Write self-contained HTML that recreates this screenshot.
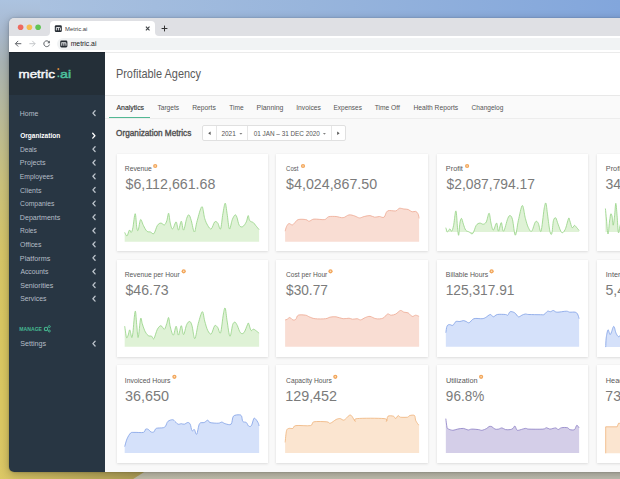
<!DOCTYPE html>
<html><head><meta charset="utf-8"><style>
*{margin:0;padding:0;box-sizing:border-box}
html,body{width:620px;height:479px;overflow:hidden}
body{position:relative;font-family:"Liberation Sans",sans-serif;
background:linear-gradient(180deg,#a9bdda 0%,#a4b4c6 18%,#b6b38a 35%,#d4bf62 55%,#d9c564 100%);}
.a{position:absolute}
.card{position:absolute;width:151.6px;height:97.4px;background:#fff;box-shadow:0 1px 2.5px rgba(0,0,0,.11),0 0 1px rgba(0,0,0,.06)}
svg.ov{position:absolute;left:0;top:0;width:620px;height:479px;font-family:"Liberation Sans",sans-serif}
</style></head><body>
<div class="a" style="left:0;top:0;width:620px;height:60px;background:linear-gradient(90deg,#acc3e0 0%,#98b5dc 50%,#82a6dc 100%)"></div>
<div class="a" style="left:0;top:0;width:40px;height:479px;background:linear-gradient(180deg,#acc3e0 0px,#a9bad0 30px,#aab4b4 63px,#bcbc96 123px,#cbc27c 183px,#d6c568 253px,#d9c762 320px,#dbc862 400px,#dcc865 479px)"></div>
<svg class="a" style="left:0;top:440px" width="620" height="39" viewBox="0 440 620 39"><defs><linearGradient id="yb" x1="0" x2="1" y1="0" y2="0"><stop offset="0" stop-color="#dcc865"/><stop offset="1" stop-color="#ae9e56"/></linearGradient><linearGradient id="gb" x1="0" x2="1" y1="0" y2="0"><stop offset="0" stop-color="#c2bfac"/><stop offset="1" stop-color="#bebdb0"/></linearGradient></defs>
<rect x="0" y="440" width="200" height="39" fill="#ad9e56"/><rect x="0" y="440" width="140" height="39" fill="url(#yb)"/><polygon points="133.2,479 620,479 620,440 194.5,440" fill="url(#gb)"/></svg>
<div class="a" style="left:9px;top:18px;width:660px;height:454px;border-radius:5px;overflow:hidden;box-shadow:0 0 1.5px rgba(0,0,0,.3),0 2px 10px rgba(0,0,0,.27)">
 <div class="a" style="left:-9px;top:-18px;width:620px;height:479px">
  <div class="a" style="left:0;top:18px;width:680px;height:18px;background:#dfe0e4"></div>
  <div class="a" style="left:45px;top:31px;width:115px;height:5px;background:#fff"></div><div class="a" style="left:40px;top:26px;width:10px;height:10px;background:#dfe0e4;border-bottom-right-radius:4px"></div><div class="a" style="left:155px;top:26px;width:10px;height:10px;background:#dfe0e4;border-bottom-left-radius:4px"></div><div class="a" style="left:50px;top:21px;width:105px;height:15px;background:#fff;border-radius:4px 4px 0 0"></div>
  <div class="a" style="left:0;top:36px;width:680px;height:16px;background:#fff"></div>
  <div class="a" style="left:56.8px;top:38.2px;width:680px;height:12.1px;border-radius:6px;background:#f1f3f4"></div>
  <div class="a" style="left:0;top:52px;width:105px;height:427px;background:#283643"></div>
  <div class="a" style="left:0;top:52px;width:105px;height:43px;background:#242f38"></div><div class="a" style="left:0;top:52px;width:105px;height:1px;background:#1e262e"></div>
  <div class="a" style="left:105px;top:52px;width:575px;height:427px;background:#f9f9f9"></div>
  <div class="a" style="left:105px;top:52px;width:575px;height:44px;background:#fff;border-top:1px solid #ebebeb;border-bottom:1px solid #e8e8e8"></div>
  <div class="a" style="left:105px;top:96px;width:575px;height:23px;background:#fafafa;border-bottom:1px solid #ededed"></div>
  <div class="a" style="left:109.3px;top:116.8px;width:41px;height:1.3px;background:#52b893"></div>
  <div class="a" style="left:202px;top:125px;width:144px;height:16px;background:#fff;border:1px solid #e0e0e0;border-radius:2px"></div>
  <div class="a" style="left:216px;top:126px;width:1px;height:14px;background:#e6e6e6"></div>
  <div class="a" style="left:247px;top:126px;width:1px;height:14px;background:#e6e6e6"></div>
  <div class="a" style="left:331px;top:126px;width:1px;height:14px;background:#e6e6e6"></div>
  <div class="card" style="left:116.5px;top:153.5px"></div><div class="card" style="left:276.0px;top:153.5px"></div><div class="card" style="left:436.6px;top:153.5px"></div><div class="card" style="left:596.8px;top:153.5px"></div><div class="card" style="left:116.5px;top:259.5px"></div><div class="card" style="left:276.0px;top:259.5px"></div><div class="card" style="left:436.6px;top:259.5px"></div><div class="card" style="left:596.8px;top:259.5px"></div><div class="card" style="left:116.5px;top:365.3px"></div><div class="card" style="left:276.0px;top:365.3px"></div><div class="card" style="left:436.6px;top:365.3px"></div><div class="card" style="left:596.8px;top:365.3px"></div>
 </div>
</div>
<svg class="ov" viewBox="0 0 620 479">
<circle cx="20.6" cy="27.2" r="2.8" fill="#ee6a5f"/><circle cx="29.4" cy="27.2" r="2.8" fill="#f5bd4f"/><circle cx="38.1" cy="27.2" r="2.8" fill="#61c454"/>
<path d="M124.7,232.4 C125.1,233.0 126.2,236.3 127.0,235.9 C127.8,235.5 128.7,230.7 129.4,230.1 C130.1,229.5 130.6,232.8 131.2,232.4 C131.8,232.0 132.2,230.9 132.9,227.7 C133.5,224.6 134.5,213.7 135.2,213.7 C135.9,213.7 136.3,225.0 136.8,227.7 C137.3,230.5 137.6,231.4 138.2,230.1 C138.9,228.7 139.7,220.3 140.6,219.6 C141.4,218.8 142.3,223.5 143.4,225.4 C144.4,227.4 145.7,230.2 146.9,231.2 C148.1,232.3 149.2,231.6 150.4,232.0 C151.6,232.3 152.7,234.7 153.9,233.6 C155.1,232.5 156.2,227.2 157.4,225.4 C158.6,223.6 159.8,223.1 160.9,223.1 C162.1,223.0 163.5,225.3 164.4,224.9 C165.4,224.5 166.1,222.7 166.8,220.7 C167.5,218.8 168.1,212.9 168.6,213.2 C169.2,213.6 169.6,220.5 170.3,223.1 C170.9,225.7 171.6,229.1 172.6,228.9 C173.6,228.7 175.2,221.7 176.1,221.9 C177.1,222.1 177.6,230.2 178.5,230.1 C179.3,230.0 180.4,221.2 181.3,221.2 C182.1,221.2 182.7,230.5 183.6,230.1 C184.5,229.6 185.8,220.9 186.7,218.4 C187.5,215.9 188.2,214.5 189.0,214.9 C189.8,215.3 190.4,217.9 191.3,220.7 C192.2,223.6 193.4,232.0 194.4,232.0 C195.3,232.0 195.9,224.9 197.2,220.7 C198.4,216.5 200.6,207.1 201.9,206.7 C203.1,206.3 203.7,215.3 204.7,218.4 C205.6,221.5 206.6,223.6 207.7,225.4 C208.8,227.2 210.0,229.5 211.2,228.9 C212.4,228.3 213.6,222.9 214.7,221.9 C215.8,220.9 216.8,221.9 217.8,223.1 C218.7,224.2 219.7,230.5 220.6,228.9 C221.4,227.4 222.1,218.0 222.9,213.7 C223.7,209.4 224.5,203.2 225.2,203.2 C225.9,203.2 226.4,209.4 227.1,213.7 C227.8,218.0 228.6,227.9 229.4,228.9 C230.3,229.9 231.3,221.9 232.3,219.6 C233.2,217.2 234.3,215.3 235.1,214.9 C235.8,214.5 236.2,215.5 236.9,217.2 C237.6,219.0 238.3,223.8 239.3,225.4 C240.2,227.0 241.6,227.2 242.8,226.6 C243.9,226.0 245.4,223.7 246.3,221.9 C247.2,220.1 247.6,215.8 248.2,215.6 C248.7,215.4 248.9,219.6 249.8,220.7 C250.7,221.9 252.3,221.8 253.3,222.6 C254.3,223.4 254.7,224.2 255.6,225.4 C256.6,226.6 258.6,228.9 259.1,229.6 L259.15,241.77 L124.68,241.77 Z" fill="#dff2d6"/><path d="M124.7,232.4 C125.1,233.0 126.2,236.3 127.0,235.9 C127.8,235.5 128.7,230.7 129.4,230.1 C130.1,229.5 130.6,232.8 131.2,232.4 C131.8,232.0 132.2,230.9 132.9,227.7 C133.5,224.6 134.5,213.7 135.2,213.7 C135.9,213.7 136.3,225.0 136.8,227.7 C137.3,230.5 137.6,231.4 138.2,230.1 C138.9,228.7 139.7,220.3 140.6,219.6 C141.4,218.8 142.3,223.5 143.4,225.4 C144.4,227.4 145.7,230.2 146.9,231.2 C148.1,232.3 149.2,231.6 150.4,232.0 C151.6,232.3 152.7,234.7 153.9,233.6 C155.1,232.5 156.2,227.2 157.4,225.4 C158.6,223.6 159.8,223.1 160.9,223.1 C162.1,223.0 163.5,225.3 164.4,224.9 C165.4,224.5 166.1,222.7 166.8,220.7 C167.5,218.8 168.1,212.9 168.6,213.2 C169.2,213.6 169.6,220.5 170.3,223.1 C170.9,225.7 171.6,229.1 172.6,228.9 C173.6,228.7 175.2,221.7 176.1,221.9 C177.1,222.1 177.6,230.2 178.5,230.1 C179.3,230.0 180.4,221.2 181.3,221.2 C182.1,221.2 182.7,230.5 183.6,230.1 C184.5,229.6 185.8,220.9 186.7,218.4 C187.5,215.9 188.2,214.5 189.0,214.9 C189.8,215.3 190.4,217.9 191.3,220.7 C192.2,223.6 193.4,232.0 194.4,232.0 C195.3,232.0 195.9,224.9 197.2,220.7 C198.4,216.5 200.6,207.1 201.9,206.7 C203.1,206.3 203.7,215.3 204.7,218.4 C205.6,221.5 206.6,223.6 207.7,225.4 C208.8,227.2 210.0,229.5 211.2,228.9 C212.4,228.3 213.6,222.9 214.7,221.9 C215.8,220.9 216.8,221.9 217.8,223.1 C218.7,224.2 219.7,230.5 220.6,228.9 C221.4,227.4 222.1,218.0 222.9,213.7 C223.7,209.4 224.5,203.2 225.2,203.2 C225.9,203.2 226.4,209.4 227.1,213.7 C227.8,218.0 228.6,227.9 229.4,228.9 C230.3,229.9 231.3,221.9 232.3,219.6 C233.2,217.2 234.3,215.3 235.1,214.9 C235.8,214.5 236.2,215.5 236.9,217.2 C237.6,219.0 238.3,223.8 239.3,225.4 C240.2,227.0 241.6,227.2 242.8,226.6 C243.9,226.0 245.4,223.7 246.3,221.9 C247.2,220.1 247.6,215.8 248.2,215.6 C248.7,215.4 248.9,219.6 249.8,220.7 C250.7,221.9 252.3,221.8 253.3,222.6 C254.3,223.4 254.7,224.2 255.6,225.4 C256.6,226.6 258.6,228.9 259.1,229.6" fill="none" stroke="#93d283" stroke-width="0.8" stroke-linejoin="round"/><path d="M285.1,231.2 C285.4,230.5 285.9,227.9 286.5,226.6 C287.2,225.3 288.0,223.8 288.9,223.5 C289.8,223.3 291.2,225.0 292.2,224.9 C293.1,224.9 293.5,224.0 294.5,223.1 C295.5,222.2 296.4,220.1 298.2,219.6 C300.1,219.0 303.9,219.3 305.7,219.6 C307.6,219.8 307.9,221.3 309.2,221.2 C310.6,221.1 311.4,219.4 313.9,219.1 C316.4,218.8 322.0,219.9 324.4,219.6 C326.9,219.2 326.7,217.3 328.6,216.7 C330.6,216.2 333.7,216.4 336.1,216.5 C338.5,216.7 341.0,218.0 343.1,217.7 C345.3,217.4 347.0,215.2 349.0,214.9 C350.9,214.6 353.1,215.5 354.8,216.0 C356.6,216.6 358.0,217.8 359.5,217.9 C361.1,218.0 362.4,216.9 364.2,216.5 C365.9,216.1 368.3,215.5 370.0,215.6 C371.8,215.7 373.2,217.1 374.7,217.2 C376.3,217.4 377.8,216.5 379.4,216.5 C381.0,216.5 382.7,218.2 384.1,217.2 C385.4,216.3 385.6,212.0 387.6,210.9 C389.5,209.9 393.8,211.3 395.8,210.9 C397.7,210.5 397.9,208.6 399.3,208.3 C400.6,208.0 402.5,208.8 403.9,209.0 C405.4,209.2 406.8,209.0 408.2,209.5 C409.5,210.0 410.9,211.5 412.1,211.8 C413.4,212.1 414.7,211.1 415.6,211.4 C416.6,211.7 417.4,212.5 418.0,213.7 C418.6,214.9 419.0,217.6 419.1,218.4 L419.15,241.77 L285.14,241.77 Z" fill="#f9ddd3"/><path d="M285.1,231.2 C285.4,230.5 285.9,227.9 286.5,226.6 C287.2,225.3 288.0,223.8 288.9,223.5 C289.8,223.3 291.2,225.0 292.2,224.9 C293.1,224.9 293.5,224.0 294.5,223.1 C295.5,222.2 296.4,220.1 298.2,219.6 C300.1,219.0 303.9,219.3 305.7,219.6 C307.6,219.8 307.9,221.3 309.2,221.2 C310.6,221.1 311.4,219.4 313.9,219.1 C316.4,218.8 322.0,219.9 324.4,219.6 C326.9,219.2 326.7,217.3 328.6,216.7 C330.6,216.2 333.7,216.4 336.1,216.5 C338.5,216.7 341.0,218.0 343.1,217.7 C345.3,217.4 347.0,215.2 349.0,214.9 C350.9,214.6 353.1,215.5 354.8,216.0 C356.6,216.6 358.0,217.8 359.5,217.9 C361.1,218.0 362.4,216.9 364.2,216.5 C365.9,216.1 368.3,215.5 370.0,215.6 C371.8,215.7 373.2,217.1 374.7,217.2 C376.3,217.4 377.8,216.5 379.4,216.5 C381.0,216.5 382.7,218.2 384.1,217.2 C385.4,216.3 385.6,212.0 387.6,210.9 C389.5,209.9 393.8,211.3 395.8,210.9 C397.7,210.5 397.9,208.6 399.3,208.3 C400.6,208.0 402.5,208.8 403.9,209.0 C405.4,209.2 406.8,209.0 408.2,209.5 C409.5,210.0 410.9,211.5 412.1,211.8 C413.4,212.1 414.7,211.1 415.6,211.4 C416.6,211.7 417.4,212.5 418.0,213.7 C418.6,214.9 419.0,217.6 419.1,218.4" fill="none" stroke="#eea892" stroke-width="0.8" stroke-linejoin="round"/><path d="M445.8,227.7 C446.1,228.4 446.8,231.8 447.5,232.0 C448.1,232.1 449.1,229.0 449.8,228.9 C450.5,228.8 451.1,231.8 451.7,231.2 C452.3,230.7 452.9,228.8 453.6,225.4 C454.3,222.0 455.2,210.5 455.9,210.9 C456.6,211.3 457.1,223.7 457.5,227.7 C458.0,231.8 458.3,236.0 458.7,235.2 C459.1,234.4 459.4,225.9 459.9,223.1 C460.3,220.3 460.9,218.2 461.5,218.4 C462.1,218.6 462.7,222.3 463.4,224.2 C464.1,226.2 464.8,228.8 465.7,230.1 C466.7,231.4 468.1,231.4 469.2,232.0 C470.4,232.5 471.6,234.7 472.7,233.6 C473.9,232.5 475.1,227.2 476.2,225.4 C477.4,223.6 478.6,223.3 479.8,223.1 C480.9,222.9 482.2,224.4 483.3,224.2 C484.4,224.0 485.3,223.7 486.3,221.9 C487.3,220.1 488.3,213.0 489.1,213.2 C489.9,213.4 490.3,220.3 491.0,223.1 C491.7,225.9 492.4,230.1 493.3,230.1 C494.3,230.1 495.7,222.9 496.6,223.1 C497.5,223.3 497.7,231.3 498.5,231.2 C499.2,231.2 500.4,222.6 501.3,222.6 C502.1,222.6 502.5,232.0 503.6,231.2 C504.7,230.5 506.7,221.0 507.8,218.4 C508.9,215.8 509.4,215.4 510.2,215.6 C510.9,215.8 511.6,216.3 512.5,219.6 C513.4,222.8 514.3,235.0 515.3,235.2 C516.3,235.4 517.2,225.7 518.3,220.7 C519.5,215.8 521.2,205.9 522.3,205.5 C523.5,205.1 524.3,214.7 525.4,218.4 C526.4,222.1 527.3,225.6 528.4,227.7 C529.5,229.9 530.5,232.2 531.7,231.2 C532.8,230.3 534.3,223.3 535.4,221.9 C536.5,220.5 537.3,221.5 538.2,223.1 C539.2,224.6 540.1,233.6 541.0,231.2 C542.0,228.9 543.3,213.7 544.1,209.0 C544.9,204.4 545.4,202.2 545.9,203.2 C546.5,204.2 546.9,210.2 547.6,214.9 C548.2,219.6 549.2,228.1 549.9,231.2 C550.6,234.4 551.2,235.3 551.8,233.6 C552.4,231.8 552.8,223.3 553.4,220.7 C554.1,218.1 555.0,217.3 555.8,217.9 C556.5,218.5 557.1,221.8 558.1,224.2 C559.1,226.6 560.4,231.5 561.6,232.4 C562.8,233.3 563.9,232.0 565.1,229.6 C566.3,227.3 567.8,219.9 568.6,218.4 C569.4,216.9 569.2,219.2 569.8,220.7 C570.4,222.3 571.4,227.0 572.1,227.7 C572.9,228.5 573.7,225.4 574.5,225.4 C575.3,225.4 576.0,226.9 576.8,227.7 C577.6,228.6 578.8,230.1 579.1,230.5 L579.15,231.95 L445.85,231.95 Z" fill="#dff2d6"/><path d="M445.8,227.7 C446.1,228.4 446.8,231.8 447.5,232.0 C448.1,232.1 449.1,229.0 449.8,228.9 C450.5,228.8 451.1,231.8 451.7,231.2 C452.3,230.7 452.9,228.8 453.6,225.4 C454.3,222.0 455.2,210.5 455.9,210.9 C456.6,211.3 457.1,223.7 457.5,227.7 C458.0,231.8 458.3,236.0 458.7,235.2 C459.1,234.4 459.4,225.9 459.9,223.1 C460.3,220.3 460.9,218.2 461.5,218.4 C462.1,218.6 462.7,222.3 463.4,224.2 C464.1,226.2 464.8,228.8 465.7,230.1 C466.7,231.4 468.1,231.4 469.2,232.0 C470.4,232.5 471.6,234.7 472.7,233.6 C473.9,232.5 475.1,227.2 476.2,225.4 C477.4,223.6 478.6,223.3 479.8,223.1 C480.9,222.9 482.2,224.4 483.3,224.2 C484.4,224.0 485.3,223.7 486.3,221.9 C487.3,220.1 488.3,213.0 489.1,213.2 C489.9,213.4 490.3,220.3 491.0,223.1 C491.7,225.9 492.4,230.1 493.3,230.1 C494.3,230.1 495.7,222.9 496.6,223.1 C497.5,223.3 497.7,231.3 498.5,231.2 C499.2,231.2 500.4,222.6 501.3,222.6 C502.1,222.6 502.5,232.0 503.6,231.2 C504.7,230.5 506.7,221.0 507.8,218.4 C508.9,215.8 509.4,215.4 510.2,215.6 C510.9,215.8 511.6,216.3 512.5,219.6 C513.4,222.8 514.3,235.0 515.3,235.2 C516.3,235.4 517.2,225.7 518.3,220.7 C519.5,215.8 521.2,205.9 522.3,205.5 C523.5,205.1 524.3,214.7 525.4,218.4 C526.4,222.1 527.3,225.6 528.4,227.7 C529.5,229.9 530.5,232.2 531.7,231.2 C532.8,230.3 534.3,223.3 535.4,221.9 C536.5,220.5 537.3,221.5 538.2,223.1 C539.2,224.6 540.1,233.6 541.0,231.2 C542.0,228.9 543.3,213.7 544.1,209.0 C544.9,204.4 545.4,202.2 545.9,203.2 C546.5,204.2 546.9,210.2 547.6,214.9 C548.2,219.6 549.2,228.1 549.9,231.2 C550.6,234.4 551.2,235.3 551.8,233.6 C552.4,231.8 552.8,223.3 553.4,220.7 C554.1,218.1 555.0,217.3 555.8,217.9 C556.5,218.5 557.1,221.8 558.1,224.2 C559.1,226.6 560.4,231.5 561.6,232.4 C562.8,233.3 563.9,232.0 565.1,229.6 C566.3,227.3 567.8,219.9 568.6,218.4 C569.4,216.9 569.2,219.2 569.8,220.7 C570.4,222.3 571.4,227.0 572.1,227.7 C572.9,228.5 573.7,225.4 574.5,225.4 C575.3,225.4 576.0,226.9 576.8,227.7 C577.6,228.6 578.8,230.1 579.1,230.5" fill="none" stroke="#93d283" stroke-width="0.8" stroke-linejoin="round"/><path d="M124.7,326.2 C125.0,328.1 126.0,335.9 126.5,337.4 C127.1,338.9 127.6,336.3 128.2,335.1 C128.7,333.8 129.2,329.5 129.8,329.9 C130.4,330.3 131.2,337.0 131.7,337.4 C132.2,337.9 132.3,337.1 132.9,332.7 C133.4,328.4 134.5,312.4 135.2,311.2 C135.9,310.1 136.3,321.4 136.8,325.7 C137.3,330.1 137.6,338.6 138.2,337.4 C138.9,336.2 139.9,321.0 140.6,318.7 C141.2,316.4 141.6,321.4 142.2,323.4 C142.9,325.3 143.6,328.4 144.6,330.4 C145.5,332.4 146.9,334.6 148.1,335.5 C149.2,336.5 150.6,335.7 151.6,336.2 C152.5,336.8 152.9,339.8 153.9,338.6 C154.9,337.4 156.2,331.4 157.4,329.2 C158.6,327.1 159.8,325.7 160.9,325.7 C162.1,325.7 163.5,329.6 164.4,329.2 C165.4,328.8 166.1,325.3 166.8,323.4 C167.5,321.4 168.1,317.0 168.6,317.5 C169.2,318.1 169.5,324.0 170.3,326.9 C171.1,329.8 172.3,335.2 173.3,335.1 C174.3,335.0 175.3,326.2 176.1,326.2 C177.0,326.2 177.6,335.2 178.5,335.1 C179.3,335.0 180.4,325.8 181.3,325.7 C182.1,325.6 182.7,334.8 183.6,334.6 C184.5,334.4 185.6,326.7 186.7,324.6 C187.7,322.4 188.8,321.3 189.7,321.5 C190.6,321.7 191.2,322.9 192.0,325.7 C192.9,328.6 193.8,339.0 194.8,338.6 C195.9,338.2 197.1,327.9 198.3,323.4 C199.6,318.9 201.3,312.1 202.3,311.7 C203.4,311.3 203.8,317.9 204.7,321.0 C205.6,324.2 206.6,328.3 207.7,330.4 C208.8,332.5 210.0,334.7 211.2,333.9 C212.4,333.1 213.6,326.8 214.7,325.7 C215.8,324.7 216.8,326.4 217.8,327.6 C218.7,328.8 219.6,335.0 220.6,332.7 C221.5,330.5 222.6,318.1 223.4,314.0 C224.1,309.9 224.6,307.0 225.2,308.2 C225.9,309.4 226.3,316.4 227.1,321.0 C227.9,325.7 229.0,335.7 229.9,336.2 C230.9,336.8 231.9,326.9 232.7,324.6 C233.6,322.2 234.3,322.0 235.1,322.2 C235.8,322.4 236.5,324.0 237.4,325.7 C238.3,327.5 239.3,331.6 240.4,332.7 C241.5,333.9 242.8,334.1 243.9,332.7 C245.1,331.4 246.7,326.1 247.5,324.6 C248.2,323.0 248.0,322.4 248.6,323.4 C249.2,324.4 250.2,329.4 251.0,330.4 C251.7,331.4 252.5,329.2 253.3,329.2 C254.1,329.2 254.7,329.7 255.6,330.4 C256.6,331.1 258.6,332.7 259.1,333.2 L259.15,346.77 L124.68,346.77 Z" fill="#dff2d6"/><path d="M124.7,326.2 C125.0,328.1 126.0,335.9 126.5,337.4 C127.1,338.9 127.6,336.3 128.2,335.1 C128.7,333.8 129.2,329.5 129.8,329.9 C130.4,330.3 131.2,337.0 131.7,337.4 C132.2,337.9 132.3,337.1 132.9,332.7 C133.4,328.4 134.5,312.4 135.2,311.2 C135.9,310.1 136.3,321.4 136.8,325.7 C137.3,330.1 137.6,338.6 138.2,337.4 C138.9,336.2 139.9,321.0 140.6,318.7 C141.2,316.4 141.6,321.4 142.2,323.4 C142.9,325.3 143.6,328.4 144.6,330.4 C145.5,332.4 146.9,334.6 148.1,335.5 C149.2,336.5 150.6,335.7 151.6,336.2 C152.5,336.8 152.9,339.8 153.9,338.6 C154.9,337.4 156.2,331.4 157.4,329.2 C158.6,327.1 159.8,325.7 160.9,325.7 C162.1,325.7 163.5,329.6 164.4,329.2 C165.4,328.8 166.1,325.3 166.8,323.4 C167.5,321.4 168.1,317.0 168.6,317.5 C169.2,318.1 169.5,324.0 170.3,326.9 C171.1,329.8 172.3,335.2 173.3,335.1 C174.3,335.0 175.3,326.2 176.1,326.2 C177.0,326.2 177.6,335.2 178.5,335.1 C179.3,335.0 180.4,325.8 181.3,325.7 C182.1,325.6 182.7,334.8 183.6,334.6 C184.5,334.4 185.6,326.7 186.7,324.6 C187.7,322.4 188.8,321.3 189.7,321.5 C190.6,321.7 191.2,322.9 192.0,325.7 C192.9,328.6 193.8,339.0 194.8,338.6 C195.9,338.2 197.1,327.9 198.3,323.4 C199.6,318.9 201.3,312.1 202.3,311.7 C203.4,311.3 203.8,317.9 204.7,321.0 C205.6,324.2 206.6,328.3 207.7,330.4 C208.8,332.5 210.0,334.7 211.2,333.9 C212.4,333.1 213.6,326.8 214.7,325.7 C215.8,324.7 216.8,326.4 217.8,327.6 C218.7,328.8 219.6,335.0 220.6,332.7 C221.5,330.5 222.6,318.1 223.4,314.0 C224.1,309.9 224.6,307.0 225.2,308.2 C225.9,309.4 226.3,316.4 227.1,321.0 C227.9,325.7 229.0,335.7 229.9,336.2 C230.9,336.8 231.9,326.9 232.7,324.6 C233.6,322.2 234.3,322.0 235.1,322.2 C235.8,322.4 236.5,324.0 237.4,325.7 C238.3,327.5 239.3,331.6 240.4,332.7 C241.5,333.9 242.8,334.1 243.9,332.7 C245.1,331.4 246.7,326.1 247.5,324.6 C248.2,323.0 248.0,322.4 248.6,323.4 C249.2,324.4 250.2,329.4 251.0,330.4 C251.7,331.4 252.5,329.2 253.3,329.2 C254.1,329.2 254.7,329.7 255.6,330.4 C256.6,331.1 258.6,332.7 259.1,333.2" fill="none" stroke="#93d283" stroke-width="0.8" stroke-linejoin="round"/><path d="M285.1,319.9 C285.5,319.8 286.2,319.8 287.0,319.4 C287.8,319.0 288.8,317.5 289.8,317.5 C290.8,317.6 291.8,319.6 292.9,319.9 C293.9,320.2 295.0,320.0 295.9,319.2 C296.8,318.4 296.6,315.9 298.2,315.2 C299.9,314.5 303.9,314.9 305.7,315.2 C307.6,315.5 307.7,316.3 309.2,316.8 C310.8,317.4 312.4,318.4 315.1,318.7 C317.8,319.0 323.1,319.0 325.6,318.7 C328.1,318.4 328.5,317.4 330.3,317.1 C332.0,316.8 334.0,316.6 336.1,316.8 C338.3,317.1 341.0,318.5 343.1,318.7 C345.3,318.9 347.4,318.2 349.0,318.2 C350.5,318.3 351.1,319.1 352.5,319.2 C353.9,319.3 355.8,318.6 357.2,318.7 C358.5,318.8 359.3,320.1 360.7,319.9 C362.0,319.7 363.8,318.1 365.4,317.5 C366.9,317.0 368.3,316.2 370.0,316.4 C371.8,316.6 373.7,318.4 375.9,318.7 C378.0,319.0 381.0,319.0 382.9,318.2 C384.8,317.5 386.2,314.5 387.6,314.0 C388.9,313.5 389.7,315.2 391.1,315.2 C392.4,315.2 394.2,314.8 395.8,314.0 C397.3,313.3 399.1,310.8 400.4,310.5 C401.8,310.2 402.7,311.8 403.9,312.2 C405.2,312.6 406.8,312.2 408.2,312.9 C409.5,313.6 410.9,316.0 412.1,316.4 C413.4,316.8 414.5,315.2 415.6,315.2 C416.8,315.2 418.6,316.2 419.1,316.4 L419.15,346.77 L285.14,346.77 Z" fill="#f9ddd3"/><path d="M285.1,319.9 C285.5,319.8 286.2,319.8 287.0,319.4 C287.8,319.0 288.8,317.5 289.8,317.5 C290.8,317.6 291.8,319.6 292.9,319.9 C293.9,320.2 295.0,320.0 295.9,319.2 C296.8,318.4 296.6,315.9 298.2,315.2 C299.9,314.5 303.9,314.9 305.7,315.2 C307.6,315.5 307.7,316.3 309.2,316.8 C310.8,317.4 312.4,318.4 315.1,318.7 C317.8,319.0 323.1,319.0 325.6,318.7 C328.1,318.4 328.5,317.4 330.3,317.1 C332.0,316.8 334.0,316.6 336.1,316.8 C338.3,317.1 341.0,318.5 343.1,318.7 C345.3,318.9 347.4,318.2 349.0,318.2 C350.5,318.3 351.1,319.1 352.5,319.2 C353.9,319.3 355.8,318.6 357.2,318.7 C358.5,318.8 359.3,320.1 360.7,319.9 C362.0,319.7 363.8,318.1 365.4,317.5 C366.9,317.0 368.3,316.2 370.0,316.4 C371.8,316.6 373.7,318.4 375.9,318.7 C378.0,319.0 381.0,319.0 382.9,318.2 C384.8,317.5 386.2,314.5 387.6,314.0 C388.9,313.5 389.7,315.2 391.1,315.2 C392.4,315.2 394.2,314.8 395.8,314.0 C397.3,313.3 399.1,310.8 400.4,310.5 C401.8,310.2 402.7,311.8 403.9,312.2 C405.2,312.6 406.8,312.2 408.2,312.9 C409.5,313.6 410.9,316.0 412.1,316.4 C413.4,316.8 414.5,315.2 415.6,315.2 C416.8,315.2 418.6,316.2 419.1,316.4" fill="none" stroke="#eea892" stroke-width="0.8" stroke-linejoin="round"/><path d="M445.8,332.7 C446.0,331.6 446.4,327.6 447.0,326.2 C447.6,324.8 448.4,324.7 449.4,324.6 C450.3,324.4 451.8,325.8 452.9,325.3 C454.0,324.8 454.7,322.1 455.9,321.5 C457.1,320.9 458.6,321.7 459.9,321.5 C461.1,321.4 462.3,320.6 463.4,320.6 C464.4,320.6 465.2,321.2 466.2,321.5 C467.2,321.9 467.9,323.2 469.2,322.7 C470.5,322.2 471.8,319.4 473.9,318.7 C476.1,318.0 480.1,318.9 482.1,318.7 C484.0,318.5 484.2,318.2 485.6,317.5 C487.0,316.8 489.0,314.6 490.3,314.5 C491.6,314.4 492.2,316.8 493.3,316.8 C494.5,316.8 495.3,314.9 497.3,314.5 C499.3,314.1 503.7,314.4 505.5,314.5 C507.2,314.6 507.0,315.7 507.8,315.2 C508.6,314.7 509.0,312.1 510.2,311.7 C511.3,311.3 513.5,312.0 514.8,312.9 C516.2,313.7 517.2,316.4 518.3,316.8 C519.5,317.2 520.7,315.7 521.9,315.2 C523.0,314.7 524.2,314.1 525.4,314.0 C526.5,313.9 526.3,314.4 528.9,314.5 C531.4,314.6 538.0,314.7 540.6,314.7 C543.1,314.7 542.9,315.1 544.1,314.5 C545.2,313.9 546.5,311.7 547.6,311.2 C548.6,310.8 549.4,311.8 550.4,311.7 C551.4,311.6 552.3,310.4 553.4,310.5 C554.5,310.6 554.8,312.0 556.9,312.2 C559.1,312.3 564.1,311.2 566.3,311.2 C568.4,311.2 568.3,312.0 569.8,312.2 C571.3,312.3 573.9,311.8 575.2,312.2 C576.5,312.5 576.8,312.9 577.5,314.0 C578.2,315.1 578.9,317.9 579.1,318.7 L579.15,346.77 L445.85,346.77 Z" fill="#d5e1fa"/><path d="M445.8,332.7 C446.0,331.6 446.4,327.6 447.0,326.2 C447.6,324.8 448.4,324.7 449.4,324.6 C450.3,324.4 451.8,325.8 452.9,325.3 C454.0,324.8 454.7,322.1 455.9,321.5 C457.1,320.9 458.6,321.7 459.9,321.5 C461.1,321.4 462.3,320.6 463.4,320.6 C464.4,320.6 465.2,321.2 466.2,321.5 C467.2,321.9 467.9,323.2 469.2,322.7 C470.5,322.2 471.8,319.4 473.9,318.7 C476.1,318.0 480.1,318.9 482.1,318.7 C484.0,318.5 484.2,318.2 485.6,317.5 C487.0,316.8 489.0,314.6 490.3,314.5 C491.6,314.4 492.2,316.8 493.3,316.8 C494.5,316.8 495.3,314.9 497.3,314.5 C499.3,314.1 503.7,314.4 505.5,314.5 C507.2,314.6 507.0,315.7 507.8,315.2 C508.6,314.7 509.0,312.1 510.2,311.7 C511.3,311.3 513.5,312.0 514.8,312.9 C516.2,313.7 517.2,316.4 518.3,316.8 C519.5,317.2 520.7,315.7 521.9,315.2 C523.0,314.7 524.2,314.1 525.4,314.0 C526.5,313.9 526.3,314.4 528.9,314.5 C531.4,314.6 538.0,314.7 540.6,314.7 C543.1,314.7 542.9,315.1 544.1,314.5 C545.2,313.9 546.5,311.7 547.6,311.2 C548.6,310.8 549.4,311.8 550.4,311.7 C551.4,311.6 552.3,310.4 553.4,310.5 C554.5,310.6 554.8,312.0 556.9,312.2 C559.1,312.3 564.1,311.2 566.3,311.2 C568.4,311.2 568.3,312.0 569.8,312.2 C571.3,312.3 573.9,311.8 575.2,312.2 C576.5,312.5 576.8,312.9 577.5,314.0 C578.2,315.1 578.9,317.9 579.1,318.7" fill="none" stroke="#7f9fe6" stroke-width="0.8" stroke-linejoin="round"/><path d="M124.7,446.6 C125.1,445.3 126.0,441.2 127.0,438.9 C128.0,436.6 129.4,434.2 130.5,433.1 C131.7,432.0 131.9,432.5 134.0,432.4 C136.2,432.2 141.4,432.9 143.4,432.4 C145.3,431.8 144.9,429.6 145.7,429.1 C146.6,428.6 147.7,429.1 148.5,429.6 C149.4,430.0 150.0,431.5 150.9,431.9 C151.8,432.3 153.0,432.5 153.9,431.9 C154.8,431.3 154.7,429.1 156.2,428.4 C157.8,427.7 161.7,428.1 163.3,427.7 C164.8,427.3 164.8,427.1 165.6,426.0 C166.4,425.0 166.8,422.4 167.9,421.4 C169.1,420.3 171.4,419.7 172.6,419.7 C173.8,419.7 174.1,420.6 175.0,421.4 C175.9,422.1 176.9,423.8 178.0,424.2 C179.1,424.6 180.2,423.7 181.3,423.7 C182.3,423.7 183.2,424.4 184.3,424.2 C185.4,424.0 186.8,422.5 187.8,422.5 C188.8,422.5 189.5,422.8 190.2,424.2 C190.9,425.5 191.3,429.8 192.0,430.7 C192.7,431.6 193.6,429.0 194.4,429.6 C195.1,430.1 195.8,435.2 196.7,434.2 C197.6,433.3 198.3,425.7 199.5,423.7 C200.8,421.8 202.8,423.1 204.2,422.5 C205.6,422.0 206.7,420.2 207.7,420.2 C208.7,420.2 208.3,422.0 210.0,422.5 C211.8,423.0 216.3,423.3 218.2,423.2 C220.2,423.2 220.6,422.0 221.7,422.1 C222.9,422.1 223.7,423.4 225.2,423.7 C226.8,424.1 229.7,425.4 231.1,424.2 C232.4,422.9 232.1,417.8 233.4,416.2 C234.8,414.7 237.9,414.8 239.3,414.8 C240.6,414.8 241.0,415.1 241.6,416.2 C242.2,417.3 242.0,420.3 242.8,421.4 C243.6,422.4 245.3,421.8 246.3,422.5 C247.3,423.3 247.8,425.5 248.6,426.0 C249.5,426.6 250.6,426.8 251.4,425.6 C252.3,424.3 253.1,419.7 253.8,418.6 C254.5,417.5 254.9,418.4 255.6,419.0 C256.3,419.7 257.4,421.4 258.0,422.5 C258.6,423.7 259.0,425.5 259.1,426.0 L259.15,452.94 L124.68,452.94 Z" fill="#d5e1fa"/><path d="M124.7,446.6 C125.1,445.3 126.0,441.2 127.0,438.9 C128.0,436.6 129.4,434.2 130.5,433.1 C131.7,432.0 131.9,432.5 134.0,432.4 C136.2,432.2 141.4,432.9 143.4,432.4 C145.3,431.8 144.9,429.6 145.7,429.1 C146.6,428.6 147.7,429.1 148.5,429.6 C149.4,430.0 150.0,431.5 150.9,431.9 C151.8,432.3 153.0,432.5 153.9,431.9 C154.8,431.3 154.7,429.1 156.2,428.4 C157.8,427.7 161.7,428.1 163.3,427.7 C164.8,427.3 164.8,427.1 165.6,426.0 C166.4,425.0 166.8,422.4 167.9,421.4 C169.1,420.3 171.4,419.7 172.6,419.7 C173.8,419.7 174.1,420.6 175.0,421.4 C175.9,422.1 176.9,423.8 178.0,424.2 C179.1,424.6 180.2,423.7 181.3,423.7 C182.3,423.7 183.2,424.4 184.3,424.2 C185.4,424.0 186.8,422.5 187.8,422.5 C188.8,422.5 189.5,422.8 190.2,424.2 C190.9,425.5 191.3,429.8 192.0,430.7 C192.7,431.6 193.6,429.0 194.4,429.6 C195.1,430.1 195.8,435.2 196.7,434.2 C197.6,433.3 198.3,425.7 199.5,423.7 C200.8,421.8 202.8,423.1 204.2,422.5 C205.6,422.0 206.7,420.2 207.7,420.2 C208.7,420.2 208.3,422.0 210.0,422.5 C211.8,423.0 216.3,423.3 218.2,423.2 C220.2,423.2 220.6,422.0 221.7,422.1 C222.9,422.1 223.7,423.4 225.2,423.7 C226.8,424.1 229.7,425.4 231.1,424.2 C232.4,422.9 232.1,417.8 233.4,416.2 C234.8,414.7 237.9,414.8 239.3,414.8 C240.6,414.8 241.0,415.1 241.6,416.2 C242.2,417.3 242.0,420.3 242.8,421.4 C243.6,422.4 245.3,421.8 246.3,422.5 C247.3,423.3 247.8,425.5 248.6,426.0 C249.5,426.6 250.6,426.8 251.4,425.6 C252.3,424.3 253.1,419.7 253.8,418.6 C254.5,417.5 254.9,418.4 255.6,419.0 C256.3,419.7 257.4,421.4 258.0,422.5 C258.6,423.7 259.0,425.5 259.1,426.0" fill="none" stroke="#7f9fe6" stroke-width="0.8" stroke-linejoin="round"/><path d="M285.1,442.4 C285.4,440.5 285.9,433.1 286.5,430.7 C287.2,428.4 287.8,428.8 288.9,428.4 C289.9,428.0 291.7,428.9 292.9,428.4 C294.0,427.9 293.0,426.0 295.9,425.6 C298.8,425.1 307.4,426.2 310.4,425.6 C313.4,425.0 311.2,422.5 313.9,421.8 C316.6,421.2 324.0,421.6 326.8,421.8 C329.5,422.1 328.7,423.6 330.3,423.2 C331.8,422.9 334.5,420.3 336.1,419.5 C337.8,418.7 339.2,418.4 340.3,418.6 C341.5,418.7 342.3,420.1 343.1,420.2 C344.0,420.3 344.5,419.8 345.5,419.0 C346.5,418.3 348.0,416.1 349.0,415.5 C350.0,414.9 350.5,414.9 351.3,415.5 C352.1,416.1 353.0,418.1 353.7,419.0 C354.3,420.0 354.7,421.4 355.3,421.4 C355.9,421.3 352.4,419.0 357.2,418.6 C362.0,418.1 379.2,418.1 384.1,418.6 C388.9,419.0 385.7,421.8 386.4,421.4 C387.1,421.0 386.9,417.1 388.0,416.2 C389.2,415.4 392.1,415.8 393.4,416.2 C394.7,416.6 395.0,418.7 395.8,418.6 C396.5,418.4 397.3,415.8 398.1,415.5 C398.9,415.3 398.9,416.9 400.4,417.2 C402.0,417.4 405.9,417.4 407.5,417.2 C409.0,416.9 408.6,415.8 409.8,415.5 C411.0,415.3 413.5,414.7 414.5,415.5 C415.4,416.3 415.1,418.8 415.6,420.2 C416.2,421.6 417.4,423.4 418.0,424.2 C418.6,425.0 419.0,424.8 419.1,424.9 L419.15,452.94 L285.14,452.94 Z" fill="#fbe5d0"/><path d="M285.1,442.4 C285.4,440.5 285.9,433.1 286.5,430.7 C287.2,428.4 287.8,428.8 288.9,428.4 C289.9,428.0 291.7,428.9 292.9,428.4 C294.0,427.9 293.0,426.0 295.9,425.6 C298.8,425.1 307.4,426.2 310.4,425.6 C313.4,425.0 311.2,422.5 313.9,421.8 C316.6,421.2 324.0,421.6 326.8,421.8 C329.5,422.1 328.7,423.6 330.3,423.2 C331.8,422.9 334.5,420.3 336.1,419.5 C337.8,418.7 339.2,418.4 340.3,418.6 C341.5,418.7 342.3,420.1 343.1,420.2 C344.0,420.3 344.5,419.8 345.5,419.0 C346.5,418.3 348.0,416.1 349.0,415.5 C350.0,414.9 350.5,414.9 351.3,415.5 C352.1,416.1 353.0,418.1 353.7,419.0 C354.3,420.0 354.7,421.4 355.3,421.4 C355.9,421.3 352.4,419.0 357.2,418.6 C362.0,418.1 379.2,418.1 384.1,418.6 C388.9,419.0 385.7,421.8 386.4,421.4 C387.1,421.0 386.9,417.1 388.0,416.2 C389.2,415.4 392.1,415.8 393.4,416.2 C394.7,416.6 395.0,418.7 395.8,418.6 C396.5,418.4 397.3,415.8 398.1,415.5 C398.9,415.3 398.9,416.9 400.4,417.2 C402.0,417.4 405.9,417.4 407.5,417.2 C409.0,416.9 408.6,415.8 409.8,415.5 C411.0,415.3 413.5,414.7 414.5,415.5 C415.4,416.3 415.1,418.8 415.6,420.2 C416.2,421.6 417.4,423.4 418.0,424.2 C418.6,425.0 419.0,424.8 419.1,424.9" fill="none" stroke="#efb27a" stroke-width="0.8" stroke-linejoin="round"/><path d="M445.8,418.6 C446.0,420.0 446.6,425.5 447.0,427.2 C447.4,428.9 447.2,428.3 448.2,428.9 C449.2,429.4 451.3,430.2 452.9,430.3 C454.4,430.3 455.8,429.4 457.5,429.1 C459.3,428.8 461.6,428.2 463.4,428.4 C465.1,428.5 466.7,429.9 468.1,430.0 C469.4,430.1 469.8,429.2 471.6,429.1 C473.3,429.0 476.8,429.4 478.6,429.6 C480.3,429.8 480.7,430.5 482.1,430.3 C483.5,430.1 485.6,429.0 486.8,428.4 C487.9,427.8 488.3,426.8 489.1,426.5 C490.0,426.2 490.9,426.3 491.9,426.7 C492.9,427.2 493.9,428.7 495.0,429.1 C496.0,429.5 497.3,429.3 498.5,429.1 C499.6,428.9 500.8,427.8 502.0,427.9 C503.1,428.0 504.1,429.3 505.5,429.6 C506.8,429.8 508.9,429.8 510.2,429.6 C511.4,429.4 512.2,429.0 513.0,428.4 C513.7,427.8 514.2,425.9 514.8,426.0 C515.5,426.2 516.1,428.9 516.7,429.6 C517.3,430.3 516.9,430.5 518.3,430.3 C519.8,430.1 523.6,428.6 525.4,428.4 C527.1,428.2 525.9,429.0 528.9,429.1 C531.8,429.2 540.0,429.3 542.9,429.1 C545.8,428.9 545.2,427.7 546.4,427.7 C547.6,427.7 548.4,429.0 549.9,429.1 C551.5,429.1 554.4,427.8 555.8,427.9 C557.1,428.0 557.1,429.6 558.1,429.6 C559.1,429.5 560.0,428.0 561.6,427.7 C563.2,427.4 566.1,427.4 567.5,427.7 C568.8,428.0 568.6,429.2 569.8,429.6 C571.0,429.9 573.3,430.3 574.5,429.6 C575.6,428.9 576.0,425.6 576.8,425.3 C577.6,425.1 578.8,427.5 579.1,427.9 L579.15,452.94 L445.85,452.94 Z" fill="#d4cee8"/><path d="M445.8,418.6 C446.0,420.0 446.6,425.5 447.0,427.2 C447.4,428.9 447.2,428.3 448.2,428.9 C449.2,429.4 451.3,430.2 452.9,430.3 C454.4,430.3 455.8,429.4 457.5,429.1 C459.3,428.8 461.6,428.2 463.4,428.4 C465.1,428.5 466.7,429.9 468.1,430.0 C469.4,430.1 469.8,429.2 471.6,429.1 C473.3,429.0 476.8,429.4 478.6,429.6 C480.3,429.8 480.7,430.5 482.1,430.3 C483.5,430.1 485.6,429.0 486.8,428.4 C487.9,427.8 488.3,426.8 489.1,426.5 C490.0,426.2 490.9,426.3 491.9,426.7 C492.9,427.2 493.9,428.7 495.0,429.1 C496.0,429.5 497.3,429.3 498.5,429.1 C499.6,428.9 500.8,427.8 502.0,427.9 C503.1,428.0 504.1,429.3 505.5,429.6 C506.8,429.8 508.9,429.8 510.2,429.6 C511.4,429.4 512.2,429.0 513.0,428.4 C513.7,427.8 514.2,425.9 514.8,426.0 C515.5,426.2 516.1,428.9 516.7,429.6 C517.3,430.3 516.9,430.5 518.3,430.3 C519.8,430.1 523.6,428.6 525.4,428.4 C527.1,428.2 525.9,429.0 528.9,429.1 C531.8,429.2 540.0,429.3 542.9,429.1 C545.8,428.9 545.2,427.7 546.4,427.7 C547.6,427.7 548.4,429.0 549.9,429.1 C551.5,429.1 554.4,427.8 555.8,427.9 C557.1,428.0 557.1,429.6 558.1,429.6 C559.1,429.5 560.0,428.0 561.6,427.7 C563.2,427.4 566.1,427.4 567.5,427.7 C568.8,428.0 568.6,429.2 569.8,429.6 C571.0,429.9 573.3,430.3 574.5,429.6 C575.6,428.9 576.0,425.6 576.8,425.3 C577.6,425.1 578.8,427.5 579.1,427.9" fill="none" stroke="#8d80c5" stroke-width="0.8" stroke-linejoin="round"/><path d="M605.4,208.5 C605.6,210.4 606.1,215.8 606.5,220.0 C606.9,224.2 607.5,233.8 608.0,234.0 C608.5,234.2 609.1,224.4 609.6,221.0 C610.1,217.6 610.4,214.5 610.8,213.8 C611.2,213.1 611.8,215.0 612.2,216.9 C612.6,218.8 612.8,225.4 613.2,225.2 C613.6,225.0 614.2,219.5 614.6,215.8 C615.0,212.2 615.4,203.3 615.8,203.3 C616.2,203.3 616.7,210.9 617.1,215.8 C617.5,220.7 617.9,230.8 618.4,232.5 C618.9,234.2 619.2,228.9 620.0,226.0 C620.8,223.1 622.5,216.8 623.0,215.0 L623.00,232.00 L605.40,232.00 Z" fill="#dff2d6"/><path d="M605.4,208.5 C605.6,210.4 606.1,215.8 606.5,220.0 C606.9,224.2 607.5,233.8 608.0,234.0 C608.5,234.2 609.1,224.4 609.6,221.0 C610.1,217.6 610.4,214.5 610.8,213.8 C611.2,213.1 611.8,215.0 612.2,216.9 C612.6,218.8 612.8,225.4 613.2,225.2 C613.6,225.0 614.2,219.5 614.6,215.8 C615.0,212.2 615.4,203.3 615.8,203.3 C616.2,203.3 616.7,210.9 617.1,215.8 C617.5,220.7 617.9,230.8 618.4,232.5 C618.9,234.2 619.2,228.9 620.0,226.0 C620.8,223.1 622.5,216.8 623.0,215.0" fill="none" stroke="#93d283" stroke-width="0.8" stroke-linejoin="round"/><path d="M605.7,347.1 C605.8,345.6 605.8,340.8 606.2,337.9 C606.6,335.0 607.4,330.4 608.0,329.8 C608.6,329.2 609.3,334.0 609.9,334.4 C610.5,334.8 610.9,333.4 611.5,332.1 C612.1,330.8 613.0,326.2 613.8,326.4 C614.6,326.6 615.3,331.6 616.1,333.3 C616.9,335.0 617.8,336.3 618.4,336.7 C619.0,337.1 618.9,336.1 620.0,335.6 C621.1,335.2 624.2,334.3 625.0,334.0 L625.00,347.10 L605.70,347.10 Z" fill="#d5e1fa"/><path d="M605.7,347.1 C605.8,345.6 605.8,340.8 606.2,337.9 C606.6,335.0 607.4,330.4 608.0,329.8 C608.6,329.2 609.3,334.0 609.9,334.4 C610.5,334.8 610.9,333.4 611.5,332.1 C612.1,330.8 613.0,326.2 613.8,326.4 C614.6,326.6 615.3,331.6 616.1,333.3 C616.9,335.0 617.8,336.3 618.4,336.7 C619.0,337.1 618.9,336.1 620.0,335.6 C621.1,335.2 624.2,334.3 625.0,334.0" fill="none" stroke="#7f9fe6" stroke-width="0.8" stroke-linejoin="round"/><path d="M605.7,453.3 L605.7,426.8 L617.2,426.8 L618.5,423.3 L625.0,423.3 L625.00,453.30 L605.70,453.30 Z" fill="#fbe5d0"/><path d="M605.7,453.3 L605.7,426.8 L617.2,426.8 L618.5,423.3 L625.0,423.3" fill="none" stroke="#efb27a" stroke-width="0.8" stroke-linejoin="round"/>
<path d="M95.10,110.70 L92.90,113.10 L95.10,115.50" fill="none" stroke="#bcc3cb" stroke-width="1.3" stroke-linecap="round" stroke-linejoin="round"/><path d="M92.70,133.30 L94.90,135.70 L92.70,138.10" fill="none" stroke="#ffffff" stroke-width="1.3" stroke-linecap="round" stroke-linejoin="round"/><path d="M95.10,146.70 L92.90,149.10 L95.10,151.50" fill="none" stroke="#bcc3cb" stroke-width="1.3" stroke-linecap="round" stroke-linejoin="round"/><path d="M95.10,160.30 L92.90,162.70 L95.10,165.10" fill="none" stroke="#bcc3cb" stroke-width="1.3" stroke-linecap="round" stroke-linejoin="round"/><path d="M95.10,173.90 L92.90,176.30 L95.10,178.70" fill="none" stroke="#bcc3cb" stroke-width="1.3" stroke-linecap="round" stroke-linejoin="round"/><path d="M95.10,187.50 L92.90,189.90 L95.10,192.30" fill="none" stroke="#bcc3cb" stroke-width="1.3" stroke-linecap="round" stroke-linejoin="round"/><path d="M95.10,201.10 L92.90,203.50 L95.10,205.90" fill="none" stroke="#bcc3cb" stroke-width="1.3" stroke-linecap="round" stroke-linejoin="round"/><path d="M95.10,214.70 L92.90,217.10 L95.10,219.50" fill="none" stroke="#bcc3cb" stroke-width="1.3" stroke-linecap="round" stroke-linejoin="round"/><path d="M95.10,228.30 L92.90,230.70 L95.10,233.10" fill="none" stroke="#bcc3cb" stroke-width="1.3" stroke-linecap="round" stroke-linejoin="round"/><path d="M95.10,241.90 L92.90,244.30 L95.10,246.70" fill="none" stroke="#bcc3cb" stroke-width="1.3" stroke-linecap="round" stroke-linejoin="round"/><path d="M95.10,255.50 L92.90,257.90 L95.10,260.30" fill="none" stroke="#bcc3cb" stroke-width="1.3" stroke-linecap="round" stroke-linejoin="round"/><path d="M95.10,269.10 L92.90,271.50 L95.10,273.90" fill="none" stroke="#bcc3cb" stroke-width="1.3" stroke-linecap="round" stroke-linejoin="round"/><path d="M95.10,282.70 L92.90,285.10 L95.10,287.50" fill="none" stroke="#bcc3cb" stroke-width="1.3" stroke-linecap="round" stroke-linejoin="round"/><path d="M95.10,296.30 L92.90,298.70 L95.10,301.10" fill="none" stroke="#bcc3cb" stroke-width="1.3" stroke-linecap="round" stroke-linejoin="round"/><path d="M95.10,341.20 L92.90,343.60 L95.10,346.00" fill="none" stroke="#bcc3cb" stroke-width="1.3" stroke-linecap="round" stroke-linejoin="round"/><circle cx="155.2" cy="166.0" r="2.1" fill="#f2a65a"/><circle cx="155.2" cy="166.0" r="0.8" fill="#fde3c6"/><circle cx="303.0" cy="166.0" r="2.1" fill="#f2a65a"/><circle cx="303.0" cy="166.0" r="0.8" fill="#fde3c6"/><circle cx="467.1" cy="166.0" r="2.1" fill="#f2a65a"/><circle cx="467.1" cy="166.0" r="0.8" fill="#fde3c6"/><circle cx="183.7" cy="271.3" r="2.1" fill="#f2a65a"/><circle cx="183.7" cy="271.3" r="0.8" fill="#fde3c6"/><circle cx="330.5" cy="271.3" r="2.1" fill="#f2a65a"/><circle cx="330.5" cy="271.3" r="0.8" fill="#fde3c6"/><circle cx="491.6" cy="271.3" r="2.1" fill="#f2a65a"/><circle cx="491.6" cy="271.3" r="0.8" fill="#fde3c6"/><circle cx="174.4" cy="376.8" r="2.1" fill="#f2a65a"/><circle cx="174.4" cy="376.8" r="0.8" fill="#fde3c6"/><circle cx="335.3" cy="376.8" r="2.1" fill="#f2a65a"/><circle cx="335.3" cy="376.8" r="0.8" fill="#fde3c6"/><circle cx="481.1" cy="376.8" r="2.1" fill="#f2a65a"/><circle cx="481.1" cy="376.8" r="0.8" fill="#fde3c6"/><path d="M208.2,133.3 L210.6,131.5 L210.6,135.1 Z" fill="#555"/><path d="M339.6,133.3 L337.2,131.5 L337.2,135.1 Z" fill="#555"/><path d="M239.4,133.2 L242.4,133.2 L240.9,134.6 Z" fill="#555"/><path d="M322.9,133.2 L325.9,133.2 L324.4,134.6 Z" fill="#555"/><rect x="57.5" y="68.2" width="1.7" height="1.7" fill="#e8913a"/><rect x="57.5" y="75.5" width="1.7" height="1.7" fill="#4cc19d"/><circle cx="46" cy="329" r="1.7" fill="none" stroke="#45b891" stroke-width="1.1"/><circle cx="49.3" cy="326.6" r="1.0" fill="none" stroke="#45b891" stroke-width="0.9"/><circle cx="49.3" cy="331" r="1.0" fill="none" stroke="#45b891" stroke-width="0.9"/><path d="M15.4,43.7 L21.3,43.7 M18.2,40.9 L15.4,43.7 L18.2,46.5" fill="none" stroke="#5f6368" stroke-width="1"/><path d="M29.4,43.7 L35.1,43.7 M32.3,40.9 L35.1,43.7 L32.3,46.5" fill="none" stroke="#c4c7ca" stroke-width="1"/><path d="M49.2,42.2 A2.9,2.9 0 1 0 49.5,44.6" fill="none" stroke="#5f6368" stroke-width="1"/><path d="M49.9,40.6 L49.9,43.2 L47.3,43.2 Z" fill="#5f6368"/><path d="M145.9,26.7 L149.5,30.3 M149.5,26.7 L145.9,30.3" stroke="#3c4043" stroke-width="1.1"/><path d="M161.6,28.5 L167.4,28.5 M164.5,25.6 L164.5,31.4" stroke="#333" stroke-width="1"/><rect x="54.8" y="25.3" width="7.00" height="6.80" rx="1.3" fill="#262c33"/><path d="M56.34,30.40 V27.48 H59.70 Q60.40,27.48 60.40,28.36 V30.40 M58.37,27.61 V30.40" fill="none" stroke="#e8eaed" stroke-width="0.98"/><rect x="60.2" y="40.6" width="7.20" height="6.80" rx="1.3" fill="#262c33"/><path d="M61.78,45.70 V42.78 H65.24 Q65.96,42.78 65.96,43.66 V45.70 M63.87,42.91 V45.70" fill="none" stroke="#e8eaed" stroke-width="1.01"/>
<text x="65.04" y="30.50" font-size="6.0" font-weight="400" fill="#3c4043" textLength="22.35" lengthAdjust="spacingAndGlyphs">Metric.ai</text><text x="70.67" y="46.30" font-size="6.4" font-weight="400" fill="#202124" textLength="25.78" lengthAdjust="spacingAndGlyphs">metric.ai</text><text x="18.57" y="77.50" font-size="11.1" font-weight="400" fill="#f4f6f8" textLength="36.34" lengthAdjust="spacingAndGlyphs" stroke="#f4f6f8" stroke-width="0.45">metric</text><text x="60.05" y="77.50" font-size="11.1" font-weight="400" fill="#4cc19d" textLength="11.08" lengthAdjust="spacingAndGlyphs" stroke="#4cc19d" stroke-width="0.45">ai</text><text x="19.86" y="116.30" font-size="6.7" font-weight="400" fill="#b6bec7" textLength="18.42" lengthAdjust="spacingAndGlyphs">Home</text><text x="20.19" y="138.10" font-size="6.7" font-weight="700" fill="#ffffff" textLength="40.12" lengthAdjust="spacingAndGlyphs">Organization</text><text x="19.88" y="151.70" font-size="6.7" font-weight="400" fill="#b6bec7" textLength="17.03" lengthAdjust="spacingAndGlyphs">Deals</text><text x="19.84" y="165.30" font-size="6.7" font-weight="400" fill="#b6bec7" textLength="25.78" lengthAdjust="spacingAndGlyphs">Projects</text><text x="19.87" y="178.90" font-size="6.7" font-weight="400" fill="#b6bec7" textLength="33.44" lengthAdjust="spacingAndGlyphs">Employees</text><text x="20.07" y="192.50" font-size="6.7" font-weight="400" fill="#b6bec7" textLength="21.35" lengthAdjust="spacingAndGlyphs">Clients</text><text x="20.08" y="206.10" font-size="6.7" font-weight="400" fill="#b6bec7" textLength="34.23" lengthAdjust="spacingAndGlyphs">Companies</text><text x="19.85" y="219.70" font-size="6.7" font-weight="400" fill="#b6bec7" textLength="40.47" lengthAdjust="spacingAndGlyphs">Departments</text><text x="19.88" y="233.30" font-size="6.7" font-weight="400" fill="#b6bec7" textLength="17.03" lengthAdjust="spacingAndGlyphs">Roles</text><text x="20.08" y="246.90" font-size="6.7" font-weight="400" fill="#b6bec7" textLength="21.34" lengthAdjust="spacingAndGlyphs">Offices</text><text x="19.84" y="260.50" font-size="6.7" font-weight="400" fill="#b6bec7" textLength="30.49" lengthAdjust="spacingAndGlyphs">Platforms</text><text x="20.40" y="274.10" font-size="6.7" font-weight="400" fill="#b6bec7" textLength="27.91" lengthAdjust="spacingAndGlyphs">Accounts</text><text x="20.18" y="287.70" font-size="6.7" font-weight="400" fill="#b6bec7" textLength="33.14" lengthAdjust="spacingAndGlyphs">Seniorities</text><text x="20.19" y="301.30" font-size="6.7" font-weight="400" fill="#b6bec7" textLength="26.23" lengthAdjust="spacingAndGlyphs">Services</text><text x="20.18" y="346.40" font-size="6.7" font-weight="400" fill="#b6bec7" textLength="25.85" lengthAdjust="spacingAndGlyphs">Settings</text><text x="19.38" y="330.90" font-size="4.9" font-weight="700" fill="#45b891" textLength="22.65" lengthAdjust="spacingAndGlyphs">MANAGE</text><text x="115.95" y="78.10" font-size="12.2" font-weight="400" fill="#5a5a5a" textLength="85.05" lengthAdjust="spacingAndGlyphs">Profitable Agency</text><text x="116.50" y="109.70" font-size="7.0" font-weight="400" fill="#333" textLength="27.51" lengthAdjust="spacingAndGlyphs" stroke="#333" stroke-width="0.15">Analytics</text><text x="157.40" y="109.70" font-size="7.0" font-weight="400" fill="#555" textLength="21.71" lengthAdjust="spacingAndGlyphs">Targets</text><text x="192.17" y="109.70" font-size="7.0" font-weight="400" fill="#555" textLength="23.64" lengthAdjust="spacingAndGlyphs">Reports</text><text x="229.30" y="109.70" font-size="7.0" font-weight="400" fill="#555" textLength="14.37" lengthAdjust="spacingAndGlyphs">Time</text><text x="256.56" y="109.70" font-size="7.0" font-weight="400" fill="#555" textLength="26.93" lengthAdjust="spacingAndGlyphs">Planning</text><text x="296.17" y="109.70" font-size="7.0" font-weight="400" fill="#555" textLength="24.74" lengthAdjust="spacingAndGlyphs">Invoices</text><text x="333.49" y="109.70" font-size="7.0" font-weight="400" fill="#555" textLength="28.41" lengthAdjust="spacingAndGlyphs">Expenses</text><text x="374.70" y="109.70" font-size="7.0" font-weight="400" fill="#555" textLength="25.18" lengthAdjust="spacingAndGlyphs">Time Off</text><text x="413.38" y="109.70" font-size="7.0" font-weight="400" fill="#555" textLength="44.73" lengthAdjust="spacingAndGlyphs">Health Reports</text><text x="471.59" y="109.70" font-size="7.0" font-weight="400" fill="#555" textLength="31.78" lengthAdjust="spacingAndGlyphs">Changelog</text><text x="116.12" y="136.10" font-size="8.4" font-weight="400" fill="#4d4d4d" textLength="75.14" lengthAdjust="spacingAndGlyphs" stroke="#4d4d4d" stroke-width="0.35">Organization Metrics</text><text x="221.40" y="135.90" font-size="6.8" font-weight="400" fill="#555" textLength="14.36" lengthAdjust="spacingAndGlyphs">2021</text><text x="253.70" y="135.90" font-size="6.8" font-weight="400" fill="#555" textLength="66.16" lengthAdjust="spacingAndGlyphs">01 JAN – 31 DEC 2020</text><text x="124.77" y="170.80" font-size="7.5" font-weight="400" fill="#585858" textLength="27.00" lengthAdjust="spacingAndGlyphs">Revenue</text><text x="125.50" y="189.30" font-size="15.1" font-weight="400" fill="#7b7b7b" textLength="89.88" lengthAdjust="spacingAndGlyphs">$6,112,661.68</text><text x="286.12" y="170.80" font-size="7.5" font-weight="400" fill="#585858" textLength="12.36" lengthAdjust="spacingAndGlyphs">Cost</text><text x="286.10" y="189.30" font-size="15.1" font-weight="400" fill="#7b7b7b" textLength="91.05" lengthAdjust="spacingAndGlyphs">$4,024,867.50</text><text x="445.83" y="170.80" font-size="7.5" font-weight="400" fill="#585858" textLength="17.05" lengthAdjust="spacingAndGlyphs">Profit</text><text x="446.50" y="189.30" font-size="15.1" font-weight="400" fill="#7b7b7b" textLength="88.46" lengthAdjust="spacingAndGlyphs">$2,087,794.17</text><text x="605.83" y="170.80" font-size="7.5" font-weight="400" fill="#585858" textLength="41.24" lengthAdjust="spacingAndGlyphs">Profit Margin</text><text x="605.56" y="189.30" font-size="15.1" font-weight="400" fill="#7b7b7b" textLength="39.82" lengthAdjust="spacingAndGlyphs">34.0%</text><text x="124.77" y="276.80" font-size="7.5" font-weight="400" fill="#585858" textLength="54.96" lengthAdjust="spacingAndGlyphs">Revenue per Hour</text><text x="125.50" y="295.30" font-size="15.1" font-weight="400" fill="#7b7b7b" textLength="43.17" lengthAdjust="spacingAndGlyphs">$46.73</text><text x="286.09" y="276.80" font-size="7.5" font-weight="400" fill="#585858" textLength="41.24" lengthAdjust="spacingAndGlyphs">Cost per Hour</text><text x="286.10" y="295.30" font-size="15.1" font-weight="400" fill="#7b7b7b" textLength="41.75" lengthAdjust="spacingAndGlyphs">$30.77</text><text x="445.86" y="276.80" font-size="7.5" font-weight="400" fill="#585858" textLength="42.35" lengthAdjust="spacingAndGlyphs">Billable Hours</text><text x="445.64" y="295.30" font-size="15.1" font-weight="400" fill="#7b7b7b" textLength="68.82" lengthAdjust="spacingAndGlyphs">125,317.91</text><text x="605.83" y="276.80" font-size="7.5" font-weight="400" fill="#585858" textLength="45.69" lengthAdjust="spacingAndGlyphs">Internal Hours</text><text x="605.56" y="295.30" font-size="15.1" font-weight="400" fill="#7b7b7b" textLength="35.14" lengthAdjust="spacingAndGlyphs">5,412</text><text x="124.76" y="382.60" font-size="7.5" font-weight="400" fill="#585858" textLength="45.75" lengthAdjust="spacingAndGlyphs">Invoiced Hours</text><text x="125.05" y="401.10" font-size="15.1" font-weight="400" fill="#7b7b7b" textLength="44.01" lengthAdjust="spacingAndGlyphs">36,650</text><text x="286.09" y="382.60" font-size="7.5" font-weight="400" fill="#585858" textLength="45.72" lengthAdjust="spacingAndGlyphs">Capacity Hours</text><text x="285.20" y="401.10" font-size="15.1" font-weight="400" fill="#7b7b7b" textLength="51.88" lengthAdjust="spacingAndGlyphs">129,452</text><text x="445.94" y="382.60" font-size="7.5" font-weight="400" fill="#585858" textLength="31.56" lengthAdjust="spacingAndGlyphs">Utilization</text><text x="445.86" y="401.10" font-size="15.1" font-weight="400" fill="#7b7b7b" textLength="38.44" lengthAdjust="spacingAndGlyphs">96.8%</text><text x="605.83" y="382.60" font-size="7.5" font-weight="400" fill="#585858" textLength="35.19" lengthAdjust="spacingAndGlyphs">Headcount</text><text x="605.34" y="401.10" font-size="15.1" font-weight="400" fill="#7b7b7b" textLength="15.62" lengthAdjust="spacingAndGlyphs">73</text>
</svg>
</body></html>
